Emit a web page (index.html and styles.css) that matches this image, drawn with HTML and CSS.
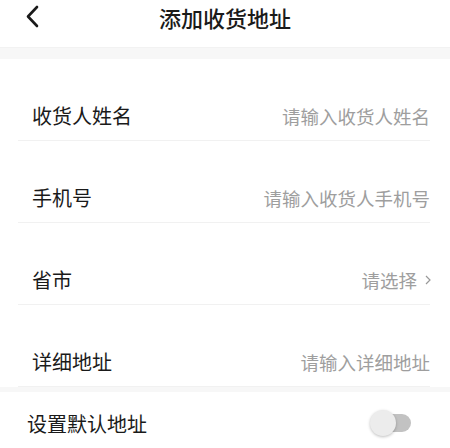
FILE: index.html
```html
<!DOCTYPE html>
<html lang="zh-CN">
<head>
    <meta charset="UTF-8">
    <meta name="viewport" content="width=device-width, initial-scale=1.0">
    <title>添加收货地址</title>
    <link rel="stylesheet" href="styles.css">
</head>
<body>
    <header class="nav-bar">
        <a class="nav-back" href="#">
            <svg width="14" height="23" viewBox="0 0 14 23">
                <path d="M12 2 L3 11.5 L12 21" fill="none" stroke="#1a1a1a" stroke-width="2.6" stroke-linecap="round" stroke-linejoin="round"/>
            </svg>
        </a>
        <h1 class="nav-title">添加收货地址</h1>
        <span></span>
    </header>

    <div class="gap"></div>

    <form class="address-form">
        <div class="form-row">
            <label for="name">收货人姓名</label>
            <input type="text" id="name" placeholder="请输入收货人姓名">
        </div>
        <div class="form-row">
            <label for="phone">手机号</label>
            <input type="tel" id="phone" placeholder="请输入收货人手机号">
        </div>
        <div class="form-row">
            <label>省市</label>
            <span class="picker">请选择<svg width="6" height="10" viewBox="0 0 6 10"><path d="M1 1 L5 5 L1 9" fill="none" stroke="#999" stroke-width="1.2"/></svg></span>
        </div>
        <div class="form-row">
            <label for="detail">详细地址</label>
            <input type="text" id="detail" placeholder="请输入详细地址">
        </div>
    </form>

    <div class="gap gap-small"></div>

    <div class="default-row">
        <span>设置默认地址</span>
        <span class="switch"><span class="switch-knob"></span></span>
    </div>
</body>
</html>
```

FILE: styles.css
```css
body {
    font-family: "Noto Sans CJK SC", "Noto Sans", sans-serif;
    margin: 0;
    padding: 0;
    background-color: #fff;
    color: #1a1a1a;
}
.nav-bar {
    height: 47px;
    display: grid;
    grid-template-columns: 1fr auto 1fr;
    align-items: start;
    box-sizing: border-box;
}
.nav-back {
    display: block;
    margin: 5px 0 0 25px;
    width: 14px;
    height: 23px;
}
.nav-back svg {
    display: block;
}
.nav-title {
    margin: 0;
    padding-top: 3px;
    font-size: 22px;
    line-height: 28px;
    font-weight: 500;
}
.gap {
    height: 12px;
    background-color: #f7f7f7;
    border-top: 1px solid #f2f2f2;
    box-sizing: border-box;
}
.gap-small {
    height: 5px;
    border-top: none;
}
.address-form {
    margin: 0;
}
.form-row {
    display: flex;
    align-items: center;
    margin: 0 20px 0 18px;
    padding: 45px 0 12px 14px;
    height: 24px;
    border-bottom: 1px solid #f1f1f1;
}
.form-row label {
    font-size: 20px;
    line-height: 24px;
    white-space: nowrap;
}
.form-row input {
    flex: 1;
    min-width: 0;
    border: none;
    outline: none;
    padding: 0;
    text-align: right;
    font-family: inherit;
    font-size: 18.5px;
    line-height: 24px;
    color: #1a1a1a;
    background: transparent;
}
.form-row input::placeholder {
    color: #9e9e9e;
}
.picker {
    margin-left: auto;
    display: flex;
    align-items: center;
    gap: 8px;
    font-size: 18.5px;
    line-height: 24px;
    color: #9e9e9e;
    margin-right: -1px;
}
.default-row {
    display: flex;
    align-items: center;
    justify-content: space-between;
    height: 62px;
    padding: 0 39px 0 27px;
    font-size: 20px;
}
.switch {
    position: relative;
    width: 36px;
    height: 18px;
    border-radius: 9px;
    background-color: #c2c2c2;
}
.switch-knob {
    position: absolute;
    left: -5px;
    top: -4px;
    width: 26px;
    height: 26px;
    border-radius: 50%;
    background-color: #ececec;
    box-shadow: 0 1px 3px rgba(0, 0, 0, 0.25);
}
```
